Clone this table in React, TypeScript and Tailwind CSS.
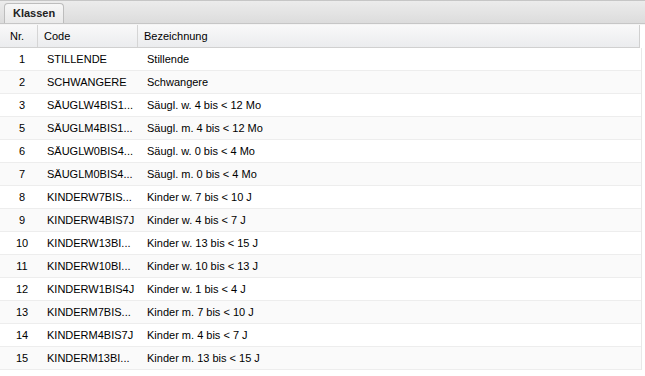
import React from 'react';

type Row = { nr: number; code: string; name: string };

// Klassen table rows (codes as shown in the grid, already truncated)
const rows: Row[] = [
  { nr: 1, code: 'STILLENDE', name: 'Stillende' },
  { nr: 2, code: 'SCHWANGERE', name: 'Schwangere' },
  { nr: 3, code: 'SÄUGLW4BIS1...', name: 'Säugl. w. 4 bis < 12 Mo' },
  { nr: 5, code: 'SÄUGLM4BIS1...', name: 'Säugl. m. 4 bis < 12 Mo' },
  { nr: 6, code: 'SÄUGLW0BIS4...', name: 'Säugl. w. 0 bis < 4 Mo' },
  { nr: 7, code: 'SÄUGLM0BIS4...', name: 'Säugl. m. 0 bis < 4 Mo' },
  { nr: 8, code: 'KINDERW7BIS...', name: 'Kinder w. 7 bis < 10 J' },
  { nr: 9, code: 'KINDERW4BIS7J', name: 'Kinder w. 4 bis < 7 J' },
  { nr: 10, code: 'KINDERW13BI...', name: 'Kinder w. 13 bis < 15 J' },
  { nr: 11, code: 'KINDERW10BI...', name: 'Kinder w. 10 bis < 13 J' },
  { nr: 12, code: 'KINDERW1BIS4J', name: 'Kinder w. 1 bis < 4 J' },
  { nr: 13, code: 'KINDERM7BIS...', name: 'Kinder m. 7 bis < 10 J' },
  { nr: 14, code: 'KINDERM4BIS7J', name: 'Kinder m. 4 bis < 7 J' },
  { nr: 15, code: 'KINDERM13BI...', name: 'Kinder m. 13 bis < 15 J' },
];

const TabStrip = () => (
  <div className="h-[24px] border-t border-b border-[#c6c6c6] bg-gradient-to-b from-[#ececec] to-[#dcdcdc] flex items-end pl-[4px]">
    <div className="h-[20px] w-[60px] rounded-t-[4px] border border-b-0 border-[#bdbdbd] bg-gradient-to-b from-[#f7f7f7] to-[#e9e9e9] flex items-center pl-[8px] text-[11px] font-bold text-[#222]">
      Klassen
    </div>
  </div>
);

const HeaderRow = () => (
  <div className="w-[640px] h-[23px] border-b border-r border-[#d0d0d0] bg-gradient-to-b from-[#f9f9f9] to-[#ebecee] flex text-[11px] text-black">
    <div className="w-[38px] border-r border-[#d5d5d5] flex items-center justify-center pr-[3px] pt-[1px]">Nr.</div>
    <div className="w-[100px] border-r border-[#d5d5d5] flex items-center pl-[6px] pt-[1px]">Code</div>
    <div className="flex-1 flex items-center pl-[6px] pt-[1px]">Bezeichnung</div>
  </div>
);

export default function App() {
  return (
    <div
      className="w-[645px] h-[376px] overflow-hidden bg-white"
      style={{ fontFamily: '"Liberation Sans", Arial, sans-serif' }}
    >
      <TabStrip />
      <div className="h-[1px] bg-[#f4f4f4]" />
      <HeaderRow />
      <div className="w-[642px] border-r border-[#e8e8e8]">
        {rows.map((r, i) => (
          <div
            key={r.nr}
            className={`h-[23px] border-b border-[#ededed] flex text-[11px] text-black pt-[1px] ${i % 2 === 1 ? 'bg-[#fafafa]' : 'bg-white'}`}
          >
            <div className="w-[38px] flex items-center justify-center pl-[6px]">{r.nr}</div>
            <div className="w-[100px] flex items-center pl-[9px] whitespace-nowrap overflow-hidden">{r.code}</div>
            <div className="flex-1 flex items-center pl-[9px] whitespace-nowrap">{r.name}</div>
          </div>
        ))}
      </div>
    </div>
  );
}
